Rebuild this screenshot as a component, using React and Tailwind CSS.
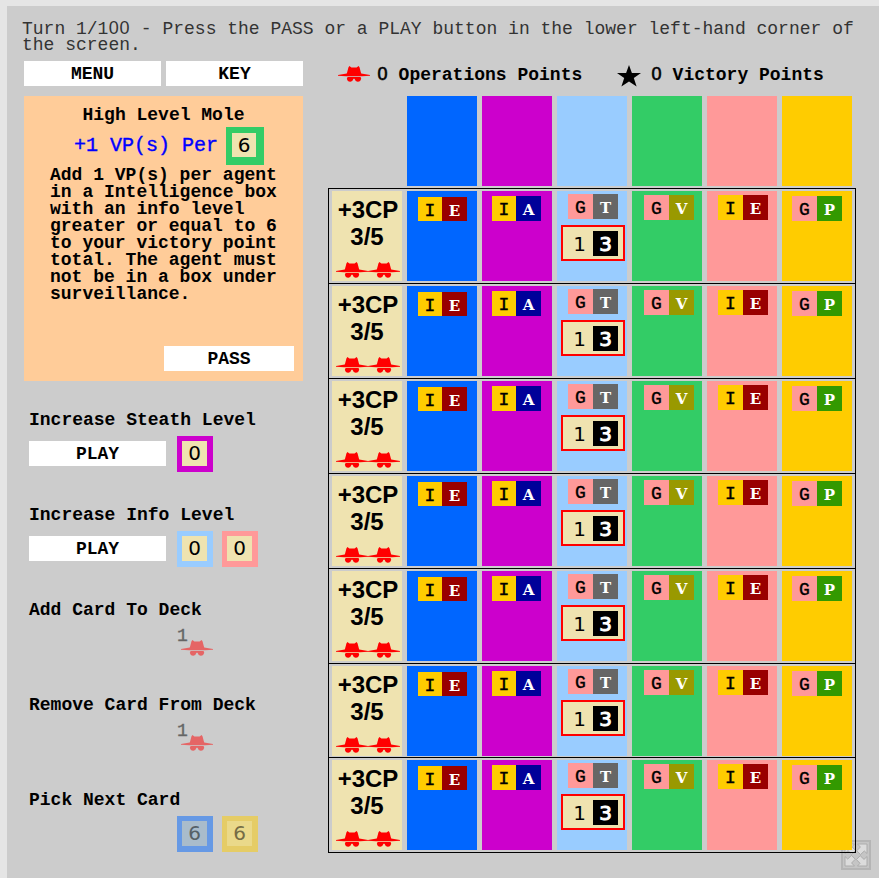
import React from "react";

function Hat({ className = "" }) {
  return (
    <svg viewBox="0 0 32 16" className={"block h-4 w-8 shrink-0 " + className} fill="#ff0000">
      <path d="M8.6 8.4 L10.4 1.6 L11.4 0 L13.4 1.6 H18.6 L20.6 0 L21.6 1.6 L23.4 8.4 Z" />
      <path d="M0 9.7 V9 L8.8 7.4 H23.2 L32 9 V9.7 L24 10.3 H8 Z" />
      <path d="M9.6 11.1 H22.6 Q24 13 22.3 14.7 Q21.5 15.7 19.6 15.7 Q17.2 15.4 16.5 12.8 H15.5 Q14.8 15.4 12.4 15.7 Q10.5 15.7 9.7 14.7 Q8 13 9.6 11.1 Z" />
    </svg>
  );
}

function Star() {
  return (
    <svg viewBox="0 0 24 22" className="mt-[4px] block h-[22px] w-[24px] shrink-0">
      <path d="M12 0 L14.9 8 H24 L16.8 13.1 L19.6 21.5 L12 16.4 L4.4 21.5 L7.2 13.1 L0 8 H9.1 Z" />
    </svg>
  );
}

function Expand() {
  return (
    <svg viewBox="0 0 30 30" className="absolute left-[841px] top-[840px] h-[30px] w-[30px]">
      <rect x="1" y="1" width="28" height="28" fill="#c5c5c5" stroke="#b5b5b5" strokeWidth="2" />
      <g fill="#dcdcdc" stroke="#acacac" strokeWidth="1">
        {[0, 90, 180, 270].map((a) => (
          <path key={a} transform={`rotate(${a} 15 15)`} d="M16.5 4 H26 V13.5 L23.3 11 L19.5 14.6 L15.7 10.8 L19.4 7 Z" />
        ))}
      </g>
    </svg>
  );
}

// Undotted zero that keeps the monospaced advance.
function Zero({ className = "" }) {
  return (
    <span className={"inline-block w-[0.6em] text-center font-['Liberation_Sans',sans-serif] leading-[0] font-normal " + className}>
      0
    </span>
  );
}

function Button({ className, children }) {
  return <button className={"h-[25px] bg-white text-center leading-[27px] font-bold " + className}>{children}</button>;
}

function LevelBox({ value, className }) {
  return (
    <div className={"h-9 w-9 shrink-0 border-5 border-r-6 border-b-6 text-center font-['DejaVu_Sans',sans-serif] text-[20px] leading-[24px] " + className}>
      {value}
    </div>
  );
}

function Action({ label, play, children }) {
  return (
    <section className="h-[95px]">
      <h3 className="h-[26px] leading-[20px] font-bold">{label}</h3>
      <div className="flex">
        <div className="w-[148px] pt-[5px]">{play && <Button className="w-[137px]">PLAY</Button>}</div>
        <div className="flex gap-[9px]">{children}</div>
      </div>
    </section>
  );
}

function Cost() {
  return (
    <div className="flex opacity-50">
      <span className="w-[4px] leading-[20px] [-webkit-text-stroke:0.4px_#000]">1</span>
      <Hat className="mt-[14px]" />
    </div>
  );
}

const TAGS = {
  I: "bg-[#ffcc00] text-black",
  G: "bg-[#ff9999] text-black",
  E: "bg-[#990000] text-white",
  A: "bg-[#000099] text-white",
  T: "bg-[#666666] text-white",
  V: "bg-[#999900] text-white",
  P: "bg-[#339900] text-white",
};

const COLUMNS = [
  { bg: "bg-[#0066ff]", tags: ["I", "E"], pos: "pl-[11px] pt-[6px]", first: "w-[24px]", h: "h-[24px]" },
  { bg: "bg-[#cc00cc]", tags: ["I", "A"], pos: "pl-[10px] pt-[5px]", first: "w-[24px]", h: "h-[25px]" },
  { bg: "bg-[#99ccff]", tags: ["G", "T"], pos: "pl-[11px] pt-[3px]", first: "w-[25px]", h: "h-[25px]", agent: true },
  { bg: "bg-[#33cc66]", tags: ["G", "V"], pos: "pl-[12px] pt-[4px]", first: "w-[25px]", h: "h-[25px]" },
  { bg: "bg-[#ff9999]", tags: ["I", "E"], pos: "pl-[11px] pt-[4px]", first: "w-[25px]", h: "h-[25px]" },
  { bg: "bg-[#ffcc00]", tags: ["G", "P"], pos: "pl-[10px] pt-[5px]", first: "w-[25px]", h: "h-[25px]" },
];

function Tag({ letter, className }) {
  const slab = letter !== "I" && letter !== "G";
  return (
    <span
      className={
        "block text-center leading-[29px] " +
        (slab
          ? "font-['DejaVu_Serif',serif] text-[15px] font-bold "
          : "text-[18px] font-normal [-webkit-text-stroke:0.4px_#000] ") +
        TAGS[letter] + " " + className
      }
    >
      {letter}
    </span>
  );
}

function Cell({ col }) {
  return (
    <div className={"h-[90px] w-[70px] " + col.bg}>
      <div className={"flex " + col.pos}>
        <Tag letter={col.tags[0]} className={col.first + " " + col.h} />
        <Tag letter={col.tags[1]} className={"w-[25px] " + col.h} />
      </div>
      {col.agent && (
        <div className="ml-[4px] mt-[6px] flex h-[36px] w-[64px] border-2 border-[#ff0000] bg-[#efe3b0] pl-[5px] pt-[4px] font-['DejaVu_Sans',sans-serif] text-[20px] leading-[26px]">
          <span className="h-[25px] w-[25px] pr-[2px] text-center">1</span>
          <span className="h-[25px] w-[25px] bg-black text-center text-white [-webkit-text-stroke:1px_#fff]">3</span>
        </div>
      )}
    </div>
  );
}

function Row({ className }) {
  return (
    <div className={"flex gap-[5px] border border-b-0 border-black pl-[3px] pt-[2px] " + className}>
      <div className="flex h-[90px] w-[70px] flex-col bg-[#efe3b0] pt-[5px] text-center font-['Liberation_Sans',sans-serif] text-[24px] font-bold leading-[27px]">
        <span className="pl-[2px] whitespace-nowrap">+3CP</span>
        <span>3/5</span>
        <div className="mt-[12px] flex pl-[3.5px]">
          <Hat />
          <Hat />
        </div>
      </div>
      {COLUMNS.map((c, i) => (
        <Cell key={i} col={c} />
      ))}
    </div>
  );
}

export default function App() {
  return (
    <div className="h-[882px] w-[882px] overflow-hidden bg-white font-['Liberation_Mono',monospace] text-[18px] text-black">
      <div className="relative h-[878px] w-[879px] bg-[#e5e5e5] pl-[7px] pt-[6px]">
        <div className="h-[872px] bg-[#cccccc] pl-[15px] pt-[15px]">
          <p className="h-[40px] leading-[16px] text-[#333]">
            Turn 1/1<Zero /><Zero /> - Press the PASS or a PLAY button in the lower left-hand corner of
            <br />
            the screen.
          </p>
          <Expand />
          <div className="flex">
            <aside className="w-[306px] pl-[2px]">
              <div className="flex gap-[5px]">
                <Button className="w-[137px]">MENU</Button>
                <Button className="w-[137px]">KEY</Button>
              </div>
              <div className="mt-[10px] flex h-[285px] w-[279px] flex-col bg-[#ffcc99] pt-[9px]">
                <h2 className="text-center leading-[20px] font-bold">High Level Mole</h2>
                <div className="mt-[2px] flex h-[38px] pl-[50px] text-[20px]">
                  <span className="w-[152px] whitespace-nowrap leading-[38px] text-[#0000ff] [-webkit-text-stroke:0.4px_#0000ff]">
                    +1 VP(s) Per
                  </span>
                  <span className="h-[38px] w-[38px] border-6 border-r-8 border-b-8 border-[#33cc66] bg-[#efe3b0] text-center font-['DejaVu_Sans',sans-serif] leading-[24px]">
                    6
                  </span>
                </div>
                <p className="mt-[2px] w-[240px] pl-[26px] whitespace-nowrap leading-[17px] font-bold">
                  Add 1 VP(s) per agent<br />in a Intelligence box<br />with an info level<br />greater or equal to 6<br />to your victory point<br />total. The agent must<br />not be in a box under<br />surveillance.
                </p>
                <Button className="ml-[140px] mt-[43px] w-[130px]">PASS</Button>
              </div>
              <div className="pl-[5px] pt-[29px]">
                <Action label="Increase Steath Level" play>
                  <LevelBox value="0" className="border-[#cc00cc] bg-[#efe3b0]" />
                </Action>
                <Action label="Increase Info Level" play>
                  <LevelBox value="0" className="border-[#99ccff] bg-[#efe3b0]" />
                  <LevelBox value="0" className="border-[#ff9999] bg-[#efe3b0]" />
                </Action>
                <Action label="Add Card To Deck">
                  <Cost />
                </Action>
                <Action label="Remove Card From Deck">
                  <Cost />
                </Action>
                <Action label="Pick Next Card">
                  <LevelBox value="6" className="border-[#6699e5] bg-[#a9bccb] text-[#556066]" />
                  <LevelBox value="6" className="border-[#e5cc66] bg-[#ead98a] text-[#756c45]" />
                </Action>
              </div>
            </aside>
            <main className="relative w-[528px]">
              <div className="flex h-[35px] pl-[10px] font-bold">
                <Hat className="mt-[5px]" />
                <span className="ml-[7px] w-[240px] whitespace-nowrap leading-[28px]">
                  <Zero className="[-webkit-text-stroke:0.6px_#000]" /> Operations Points
                </span>
                <Star />
                <span className="ml-[10px] whitespace-nowrap leading-[28px]">
                  <Zero className="[-webkit-text-stroke:0.6px_#000]" /> Victory Points
                </span>
              </div>
              <div className="flex gap-[5px] pl-[79px]">
                {COLUMNS.map((c, i) => (
                  <div key={i} className={"h-[90px] w-[70px] " + c.bg} />
                ))}
              </div>
              <div className="mt-[2px] border-b border-black">
                <Row className="h-[95px]" />
                <Row className="h-[95px]" />
                <Row className="h-[95px]" />
                <Row className="h-[95px]" />
                <Row className="h-[95px]" />
                <Row className="h-[94px]" />
                <Row className="h-[95px]" />
              </div>
            </main>
          </div>
        </div>
      </div>
    </div>
  );
}
